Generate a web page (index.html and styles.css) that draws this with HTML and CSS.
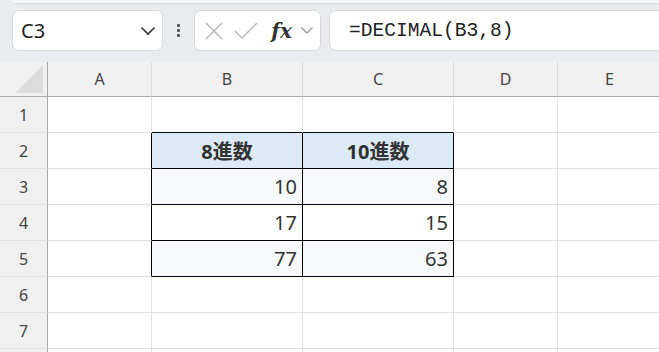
FILE: index.html
```html
<!DOCTYPE html>
<html lang="ja">
<head>
    <meta charset="UTF-8">
    <title>DECIMAL</title>
    <link rel="stylesheet" href="styles.css">
</head>
<body>

<!-- Строка формул -->
<div class="toolbar">
    <div class="ribbon-edge"></div>
    <div class="formula-bar">
        <div class="name-box">
            <span>C3</span>
            <svg width="16" height="10" viewBox="0 0 16 10"><path d="M1.5 1.5 L8 8 L14.5 1.5" fill="none" stroke="#333" stroke-width="1.6"/></svg>
        </div>
        <div class="grip"><i></i><i></i><i></i></div>
        <div class="fx-box">
            <svg width="22" height="22" viewBox="0 0 22 22"><path d="M3 3 L19 19 M19 3 L3 19" stroke="#b9b9b9" stroke-width="1.5"/></svg>
            <svg width="26" height="22" viewBox="0 0 26 22"><path d="M2 11 L9 18 L24 3" fill="none" stroke="#b9b9b9" stroke-width="1.5"/></svg>
            <span class="fx">fx</span>
            <svg width="14" height="9" viewBox="0 0 14 9"><path d="M1.5 1.5 L7 7 L12.5 1.5" fill="none" stroke="#9a9a9a" stroke-width="1.4"/></svg>
        </div>
        <div class="formula">=DECIMAL(B3,8)</div>
    </div>
</div>

<!-- Лист -->
<div class="sheet">
    <div class="corner"><div class="tri"></div></div>
    <div class="col-head">A</div>
    <div class="col-head">B</div>
    <div class="col-head">C</div>
    <div class="col-head">D</div>
    <div class="col-head">E</div>

    <div class="row-head">1</div>
    <div class="cell"></div>
    <div class="cell tt"></div>
    <div class="cell tt"></div>
    <div class="cell"></div>
    <div class="cell"></div>

    <div class="row-head">2</div>
    <div class="cell tl"></div>
    <div class="cell t head">8進数</div>
    <div class="cell t head">10進数</div>
    <div class="cell"></div>
    <div class="cell"></div>

    <div class="row-head">3</div>
    <div class="cell tl"></div>
    <div class="cell t num band">10</div>
    <div class="cell t num band">8</div>
    <div class="cell"></div>
    <div class="cell"></div>

    <div class="row-head">4</div>
    <div class="cell tl"></div>
    <div class="cell t num">17</div>
    <div class="cell t num">15</div>
    <div class="cell"></div>
    <div class="cell"></div>

    <div class="row-head">5</div>
    <div class="cell tl"></div>
    <div class="cell t num band">77</div>
    <div class="cell t num band">63</div>
    <div class="cell"></div>
    <div class="cell"></div>

    <div class="row-head">6</div>
    <div class="cell"></div>
    <div class="cell"></div>
    <div class="cell"></div>
    <div class="cell"></div>
    <div class="cell"></div>

    <div class="row-head">7</div>
    <div class="cell"></div>
    <div class="cell"></div>
    <div class="cell"></div>
    <div class="cell"></div>
    <div class="cell"></div>

    <!-- край следующей строки -->
    <div class="row-head"></div>
    <div class="cell"></div>
    <div class="cell"></div>
    <div class="cell"></div>
    <div class="cell"></div>
    <div class="cell"></div>
</div>

</body>
</html>
```

FILE: styles.css
```css
body { margin: 0; background: #fff; font-family: "Noto Sans", "Noto Sans CJK JP", sans-serif; color: #333; overflow: hidden; }

/* Строка формул */
.toolbar { height: 62px; background: #e9ecef; }
.ribbon-edge {
    height: 3px;
    margin-left: 12px;
    background: #f6f7f8;
    border-bottom-left-radius: 6px;
    box-shadow: 0 1px 2px rgba(0, 0, 0, 0.08);
}
.formula-bar { display: flex; align-items: center; padding: 7px 0 0 12px; height: 41px; }

.name-box, .fx-box, .formula {
    box-sizing: border-box;
    height: 41px;
    background: #fff;
    border: 1px solid #d6d9dd;
    border-radius: 7px;
    display: flex;
    align-items: center;
}
.name-box { width: 151px; padding: 0 6px 0 8px; justify-content: space-between; font-size: 20px; color: #222; }

.grip { width: 31px; display: flex; flex-direction: column; align-items: center; gap: 2px; }
.grip i { width: 3px; height: 3px; background: #555; border-radius: 1px; }

.fx-box { width: 127px; padding: 0 6px 0 8px; justify-content: space-between; }
.fx { font-family: "DejaVu Serif", "Liberation Serif", serif; font-style: italic; font-weight: bold; font-size: 20px; color: #333; margin-left: 4px; }

.formula {
    flex: 1;
    margin-left: 8px;
    margin-right: -10px;
    padding-left: 19px;
    font-family: "Liberation Mono", monospace;
    font-size: 19.6px;
    color: #222;
}

/* Сетка листа */
.sheet {
    display: grid;
    grid-template-columns: 48px 104px 151px 151px 104px 104px;
    grid-template-rows: 35px repeat(8, 36px);
}
.sheet > div { box-sizing: border-box; }

.corner { background: #f0f0f0; border-right: 1px solid #a8a8a8; border-bottom: 1px solid #ababab; position: relative; }
.tri {
    position: absolute;
    right: 4px;
    bottom: 3px;
    width: 27px;
    height: 27px;
    background: linear-gradient(135deg, transparent 50%, #dcdcdc 50%);
}

.col-head {
    background: #f0f0f0;
    border-right: 1px solid #dadada;
    border-bottom: 1px solid #ababab;
    display: flex;
    align-items: center;
    justify-content: center;
    font-size: 16px;
    color: #444;
}
.row-head {
    background: #f0f0f0;
    border-right: 1px solid #a8a8a8;
    border-bottom: 1px solid #e2e2e2;
    display: flex;
    align-items: center;
    justify-content: center;
    font-size: 16px;
    color: #444;
}

.cell {
    border-right: 1px solid #e1e1e1;
    border-bottom: 1px solid #e1e1e1;
    display: flex;
    align-items: center;
    font-size: 20px;
    color: #333;
}
.cell.tt { border-bottom-color: #000; }
.cell.tl { border-right-color: #000; }
.cell.t { border-right-color: #000; border-bottom-color: #000; }
.cell.head { background: #dce9f6; justify-content: center; font-weight: bold; }
.cell.num { justify-content: flex-end; padding-right: 5px; }
.cell.band { background: #f7f9fc; }
```
